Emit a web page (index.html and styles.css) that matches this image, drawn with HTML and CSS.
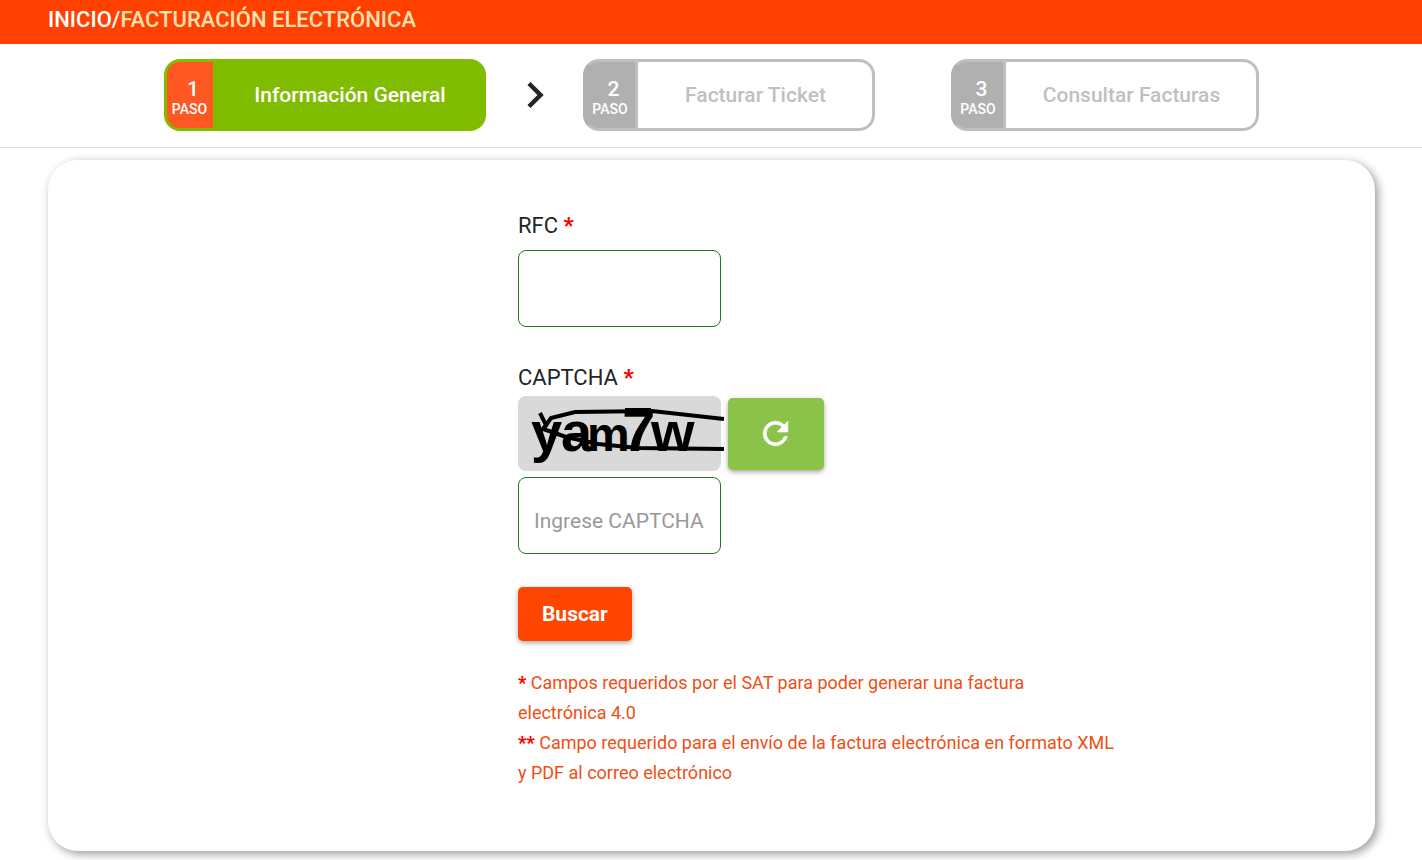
FILE: index.html
```html
<!DOCTYPE html>
<html lang="es">
<head>
    <meta charset="UTF-8">
    <meta name="viewport" content="width=device-width, initial-scale=1.0">
    <title>Facturación Electrónica</title>
    <link rel="stylesheet" href="styles.css">
</head>
<body>
    <nav class="breadcrumb">
        <a href="#">INICIO/</a><span>FACTURACIÓN ELECTRÓNICA</span>
    </nav>

    <ol class="steps">
        <li class="step step-1 active">
            <div class="step-number"><b>1</b><small>PASO</small></div>
            <div class="step-label">Información General</div>
        </li>
        <li class="step-arrow" aria-hidden="true">
            <svg width="18" height="28" viewBox="0 0 18 28">
                <path d="M2 2.5 L13.5 14 L2 25.5" fill="none" stroke="#212529" stroke-width="4.5"/>
            </svg>
        </li>
        <li class="step step-2">
            <div class="step-number"><b>2</b><small>PASO</small></div>
            <div class="step-label">Facturar Ticket</div>
        </li>
        <li class="step step-3">
            <div class="step-number"><b>3</b><small>PASO</small></div>
            <div class="step-label">Consultar Facturas</div>
        </li>
    </ol>

    <main class="card">
        <form class="form">
            <div class="field">
                <label for="rfc">RFC <b class="required">*</b></label>
                <input type="text" id="rfc">
            </div>

            <div class="field">
                <label for="captcha">CAPTCHA <b class="required">*</b></label>
                <div class="captcha-row">
                    <div class="captcha-image">
                        <svg width="203" height="75" viewBox="0 0 203 75">
                            <text class="captcha-text" y="55" x="13 43 69 104 133">ya<tspan class="small">m</tspan><tspan class="big">7</tspan>w</text>
                            <g fill="none" stroke="#000" stroke-width="4">
                                <path d="M22 17 L28 29 L25 33 L34 36 L48 41 L80 48 L120 52 L206 53"/>
                                <path d="M26 32 L33 22 L57 16 L134 15 L206 23"/>
                                <path d="M107 15 H133" stroke-width="6"/>
                            </g>
                        </svg>
                    </div>
                    <button type="button" class="btn btn-refresh" aria-label="Recargar CAPTCHA">
                        <svg width="37" height="37" viewBox="0 0 24 24">
                            <path fill="#fff" stroke="#fff" stroke-width=".4" d="M17.65 6.35A7.96 7.96 0 0 0 12 4a8 8 0 1 0 7.73 10h-2.08A6 6 0 1 1 12 6c1.66 0 3.14.69 4.22 1.78L13 11h7V4l-2.35 2.35z"/>
                        </svg>
                    </button>
                </div>
                <input type="text" id="captcha" placeholder="Ingrese CAPTCHA">
            </div>

            <button type="submit" class="btn btn-search">Buscar</button>

            <p class="notes">
                <b class="required">*</b> Campos requeridos por el SAT para poder generar una factura electrónica 4.0<br>
                <b class="required">**</b> Campo requerido para el envío de la factura electrónica en formato XML y PDF al correo electrónico
            </p>
        </form>
    </main>
</body>
</html>
```

FILE: styles.css
```css
* {
    box-sizing: border-box;
}
body {
    margin: 0;
    font-family: Roboto, sans-serif;
    font-size: 22px;
    color: #212529;
    background-color: #fff;
}
.breadcrumb {
    background-color: #ff4000;
    color: #ffe0b2;
    padding: 0 48px 4px;
    line-height: 40px;
    font-weight: 500;
}
.breadcrumb a {
    color: #fff;
    text-decoration: none;
}
.steps {
    display: flex;
    justify-content: center;
    margin: 0;
    padding: 15px 0 16px;
    list-style: none;
    border-bottom: 1px solid #dedede;
}
.step {
    display: flex;
    height: 72px;
    border: 3px solid #bfbfbf;
    border-radius: 16px;
    overflow: hidden;
    color: #bfbfbf;
    font-size: 21px;
    font-weight: 500;
}
.step-1 {
    width: 322px;
}
.step-2 {
    width: 292px;
}
.step-3 {
    width: 308px;
    margin-left: 76px;
}
.step-2,
.step-3 {
    /* the grey number block runs under the border */
    border-color: #bfbfbf #bfbfbf #bfbfbf #b0b0b0;
    background: linear-gradient(to right, #b0b0b0 49px, #fff 49px);
}
.step-number {
    display: flex;
    flex-direction: column;
    align-items: center;
    justify-content: center;
    width: 49px;
    padding-top: 6px;
    background-color: #b0b0b0;
    color: #fff;
    line-height: 22px;
}
.step-number b {
    padding-left: 7px;
    font-weight: 500;
}
.step-number small {
    font-size: 14px;
    line-height: 18px;
}
.step-label {
    flex: 1;
    padding-left: 2px;
    line-height: 66px;
    text-align: center;
    border-left: 3px solid #bfbfbf;
}
.step.active {
    background-color: #80bc00;
    border-color: #80bc00;
    color: #fff;
}
.active .step-number {
    width: 46px;
    background-color: #ff5722;
}
.active .step-label {
    border-color: #80bc00;
}
.step-arrow {
    display: flex;
    align-items: center;
    justify-content: center;
    width: 97px;
    padding-left: 4px;
}
.card {
    display: grid;
    grid-template-columns: 17fr 22fr 9fr;
    margin: 12px 47px 9px 48px;
    padding: 48px 0 63px;
    border-radius: 30px;
    box-shadow: 3px 3px 10px rgba(0,0,0,0.4);
}
.form {
    grid-column: 2;
    max-width: 598px;
}
.field {
    margin-bottom: 33px;
}
label {
    display: block;
    line-height: 36px;
}
.field input {
    display: block;
    width: 203px;
    height: 77px;
    padding: 10px 15px 0;
    border: 1px solid #1b7a1b;
    border-radius: 8px;
    font-family: inherit;
    font-size: 21px;
}
#rfc {
    margin-top: 6px;
}
.field input::placeholder {
    color: #999;
}
.required {
    color: #f00;
    font-weight: 900;
}
.captcha-row {
    display: flex;
    align-items: center;
    gap: 7px;
    margin-bottom: 6px;
}
.captcha-image {
    width: 203px;
    height: 75px;
    border-radius: 8px;
    background-color: #d9d9d9;
}
.captcha-image svg {
    display: block;
    overflow: visible;
}
.captcha-text {
    font-family: "Liberation Sans", sans-serif;
    font-size: 56px;
    font-weight: bold;
}
.captcha-text .small {
    font-size: 48px;
}
.captcha-text .big {
    font-size: 60px;
}
.btn {
    border: none;
    border-radius: 5px;
    color: #fff;
    font-family: inherit;
    cursor: pointer;
    box-shadow: 0 2px 5px rgba(0,0,0,0.35);
}
.btn-refresh {
    width: 96px;
    height: 72px;
    background-color: #8bc34a;
}
.btn-refresh svg {
    display: block;
    margin: 0 auto;
}
.btn-search {
    height: 54px;
    padding: 0 24px;
    background-color: #ff4500;
    font-size: 21px;
    font-weight: bold;
}
.notes {
    margin: 27px 0 0;
    color: #f04e14;
    font-size: 18px;
    line-height: 30px;
}
```
